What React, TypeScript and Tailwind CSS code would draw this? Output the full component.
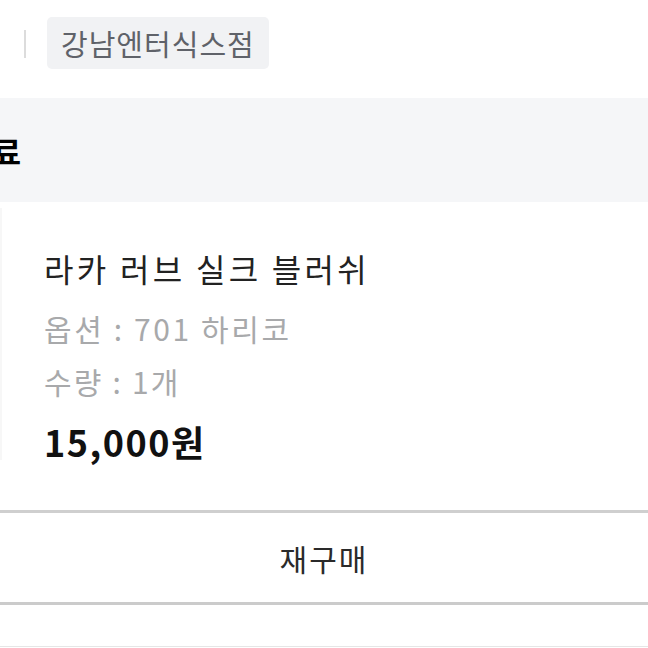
const font = { fontFamily: '"Noto Sans CJK KR", "Noto Sans", sans-serif' };

export default function App() {
  return (
    <div className="w-[648px] h-[648px] overflow-hidden bg-white" style={font}>
      {/* store row */}
      <div className="h-[98px] flex items-start">
        <div className="ml-[24px] mt-[30px] w-[2px] h-[28px] bg-[#dcdcdc]" />
        <div className="ml-[21px] mt-[17px] h-[52px] px-[14px] flex items-center rounded-[5px] bg-[#f1f2f4] text-[29px] tracking-[1px] leading-none text-[#5f6269]">
          강남엔터식스점
        </div>
      </div>

      {/* status band */}
      <div className="h-[104px] bg-[#f5f6f8] flex items-center">
        <div className="-ml-[36px] text-[31px] font-bold text-black leading-none">완료</div>
      </div>

      {/* product */}
      <div className="h-[308px] flex">
        <div className="w-[2px] mt-[6px] h-[252px] bg-[#f7f7f7]" />
        <div className="ml-[42px] pt-[47px] flex flex-col">
          <div className="text-[32px] tracking-[3.3px] leading-[38px] text-[#222]">라카 러브 실크 블러쉬</div>
          <div className="mt-[22px] text-[30px] tracking-[2.6px] leading-[38px] text-[#a8a9ab]">옵션 : 701 하리코</div>
          <div className="mt-[15px] text-[30px] tracking-[2.2px] leading-[38px] text-[#a8a9ab]">수량 : 1개</div>
          <div className="mt-[22px] text-[36px] tracking-[1.5px] leading-[38px] font-bold text-[#111]">15,000원</div>
        </div>
      </div>

      {/* actions */}
      <div className="border-t-[3px] border-[#cfcfcf] h-[92px] flex items-center justify-center">
        <span className="text-[30px] tracking-[2px] text-[#2a2a2a] leading-none">재구매</span>
      </div>
      <div className="border-t-[3px] border-[#cbcbcb] h-[44px]" />
      <div className="border-t border-[#e6e6e6]" />
    </div>
  );
}
